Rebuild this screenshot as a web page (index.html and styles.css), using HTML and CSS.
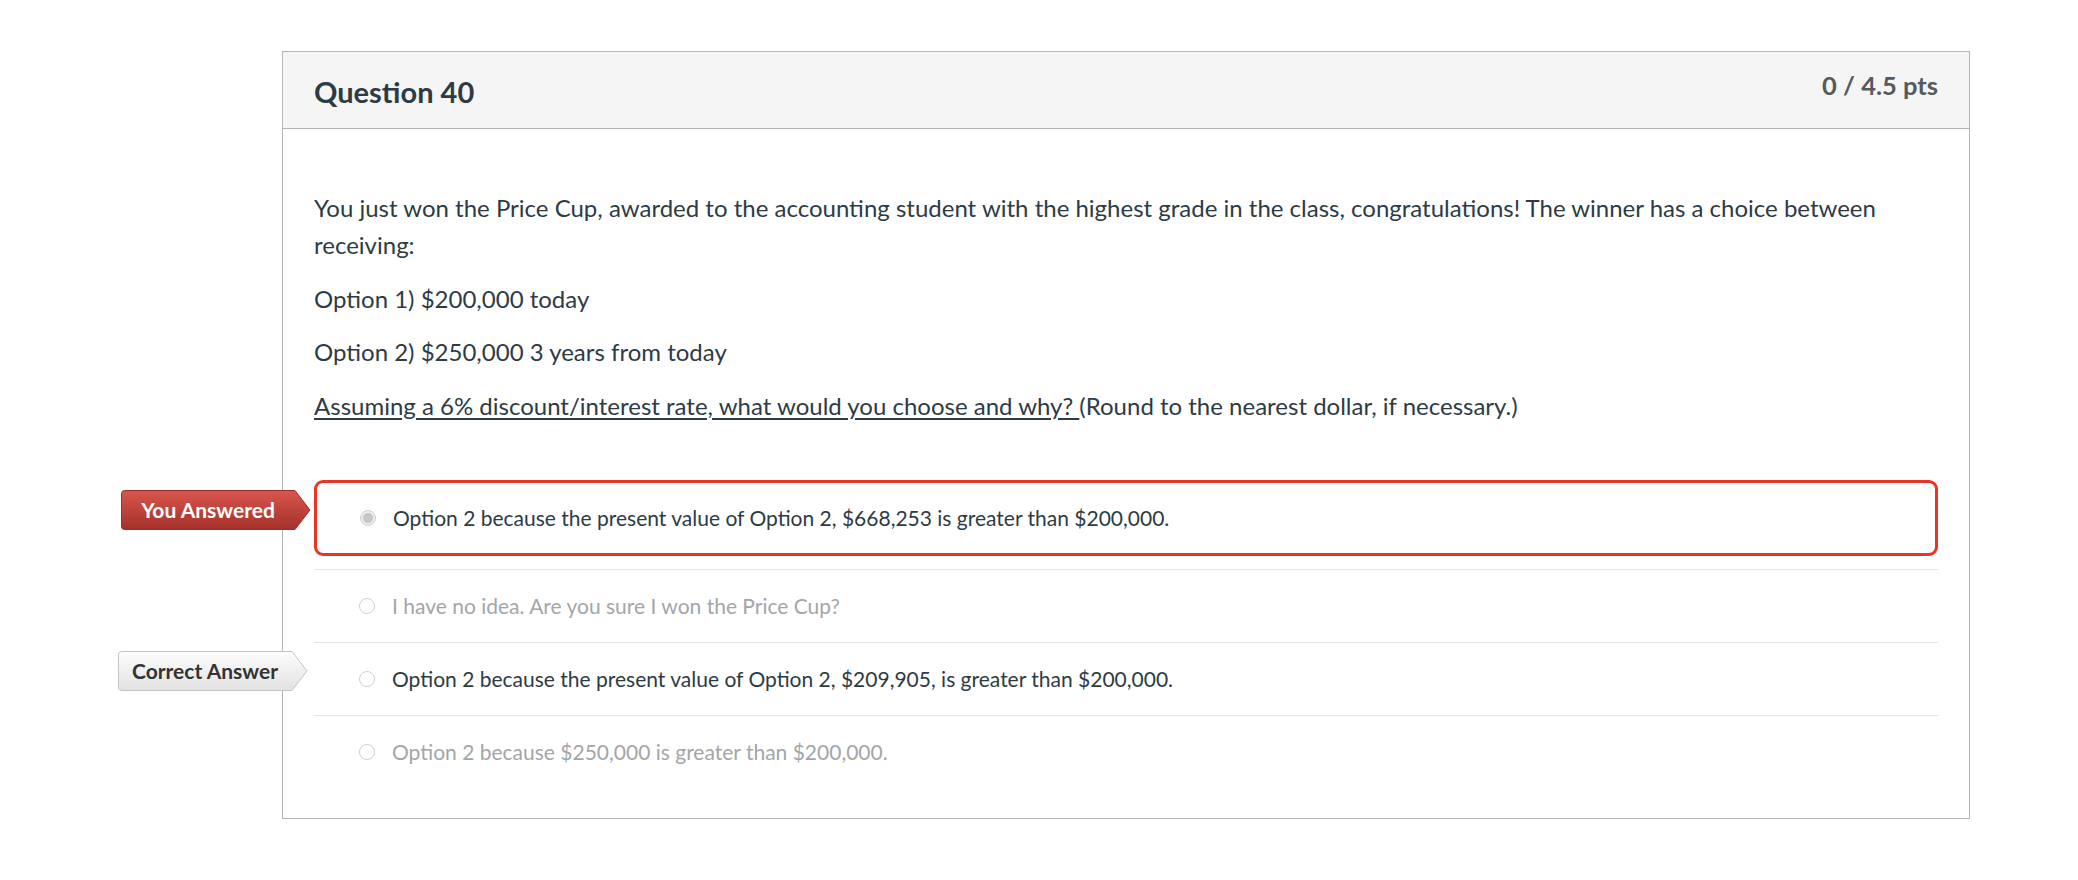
FILE: index.html
```html
<!DOCTYPE html>
<html lang="en">
<head>
<meta charset="utf-8">
<title>Question 40</title>
<link rel="stylesheet" href="styles.css">
</head>
<body>
<div class="question">
  <div class="q-header">
    <h2 class="q-title">Question 40</h2>
    <div class="q-points">0 / 4.5 pts</div>
  </div>
  <div class="q-body">
    <div class="q-text">
      <p>You just won the Price Cup, awarded to the accounting student with the highest grade in the class, congratulations! The winner has a choice between receiving:</p>
      <p>Option 1) $200,000 today</p>
      <p>Option 2) $250,000 3 years from today</p>
      <p><span class="u">Assuming a 6% discount/interest rate, what would you choose and why? </span>(Round to the nearest dollar, if necessary.)</p>
    </div>
    <div class="answers">
      <div class="answer wrong">
        <div class="badge badge-red">
          <svg class="badge-shape" viewBox="0 0 190 40" preserveAspectRatio="none">
            <defs>
              <linearGradient id="gr" x1="0" y1="0" x2="0" y2="1">
                <stop offset="0" stop-color="#d9564d"/>
                <stop offset="1" stop-color="#a4312a"/>
              </linearGradient>
            </defs>
            <path d="M3.5,0.5 H174 L189,20 L174,39.5 H3.5 Q0.5,39.5 0.5,36.5 V3.5 Q0.5,0.5 3.5,0.5 Z" fill="url(#gr)" stroke="#9e2f28" stroke-width="1"/>
          </svg>
          <span class="badge-text">You Answered</span>
        </div>
        <div class="answer-row boxed">
          <span class="radio checked"></span>
          <span class="a-text">Option 2 because the present value of Option 2, $668,253 is greater than $200,000.</span>
        </div>
      </div>
      <div class="answer">
        <div class="answer-row">
          <span class="radio"></span>
          <span class="a-text muted">I have no idea. Are you sure I won the Price Cup?</span>
        </div>
      </div>
      <div class="answer">
        <div class="badge badge-gray">
          <svg class="badge-shape" viewBox="0 0 190 40" preserveAspectRatio="none">
            <defs>
              <linearGradient id="gg" x1="0" y1="0" x2="0" y2="1">
                <stop offset="0" stop-color="#fdfdfd"/>
                <stop offset="1" stop-color="#e2e2e2"/>
              </linearGradient>
            </defs>
            <path d="M3.5,0.5 H174 L189,20 L174,39.5 H3.5 Q0.5,39.5 0.5,36.5 V3.5 Q0.5,0.5 3.5,0.5 Z" fill="url(#gg)" stroke="#c4c4c4" stroke-width="1"/>
          </svg>
          <span class="badge-text">Correct Answer</span>
        </div>
        <div class="answer-row">
          <span class="radio"></span>
          <span class="a-text">Option 2 because the present value of Option 2, $209,905, is greater than $200,000.</span>
        </div>
      </div>
      <div class="answer last">
        <div class="answer-row">
          <span class="radio"></span>
          <span class="a-text muted">Option 2 because $250,000 is greater than $200,000.</span>
        </div>
      </div>
    </div>
  </div>
</div>
</body>
</html>
```
FILE: styles.css
```css
html, body {
  margin: 0;
  padding: 0;
  background: #ffffff;
}

body {
  font-family: Lato, "Open Sans", "Liberation Sans", sans-serif;
  color: #2d3b45;
}

.question {
  box-sizing: border-box;
  width: 1688px;
  margin: 51px 0 0 282px;
  border: 1px solid #b3b3b3;
  background: #ffffff;
}

.q-header {
  box-sizing: border-box;
  height: 77px;
  display: flex;
  justify-content: space-between;
  align-items: flex-start;
  padding: 22px 31px 0;
  background: #f5f5f5;
  border-bottom: 1px solid #b3b3b3;
}

.q-title {
  margin: 0;
  font-size: 29px;
  line-height: 35px;
  font-weight: 700;
  color: #2d3b45;
}

.q-points {
  margin-top: -4px;
  font-size: 25.5px;
  line-height: 30px;
  font-weight: 700;
  color: #555a5e;
}

.q-body {
  padding: 60px 31px 30px;
}

.q-text p {
  margin: 0 0 16.5px;
  font-size: 24px;
  line-height: 37px;
}

.u {
  text-decoration: underline;
  text-underline-offset: 3px;
}

.answers {
  margin-top: 56px;
}

.answer {
  position: relative;
  padding: 20px 0;
  border-bottom: 1px solid #e6e6e6;
}

.answer.wrong {
  padding: 0 0 13px;
}

.answer.last {
  border-bottom: none;
}

.answer-row {
  display: flex;
  align-items: center;
  gap: 17px;
  height: 32px;
  padding-left: 45px;
}

.answer-row.boxed {
  box-sizing: border-box;
  height: 76px;
  padding-left: 43px;
  gap: 17px;
  border: 3px solid #ea3424;
  border-radius: 9px;
}

.radio {
  box-sizing: border-box;
  flex: none;
  width: 16px;
  height: 16px;
  border-radius: 50%;
  border: 1px solid #cfcfcf;
  background: #ffffff;
}

.radio.checked {
  border-color: #d0d0d0;
  background: radial-gradient(circle, #c6c6c6 0 4.5px, #ececec 5.5px);
}

.a-text {
  font-size: 21px;
  line-height: 32px;
  color: #2d3b45;
  white-space: nowrap;
}

.a-text.muted {
  color: #a2a6a9;
}

.badge {
  position: absolute;
  width: 190px;
  height: 40px;
  display: flex;
  align-items: center;
}

.badge-red {
  left: -193px;
  top: 10px;
}

.badge-gray {
  left: -196px;
  top: 8px;
}

.badge-shape {
  position: absolute;
  left: 0;
  top: 0;
  width: 190px;
  height: 40px;
}

.badge-text {
  position: relative;
  width: 174px;
  text-align: center;
  font-size: 21px;
  font-weight: 700;
  line-height: 40px;
}

.badge-red .badge-text {
  color: #ffffff;
}

.badge-gray .badge-text {
  color: #333333;
}
```
